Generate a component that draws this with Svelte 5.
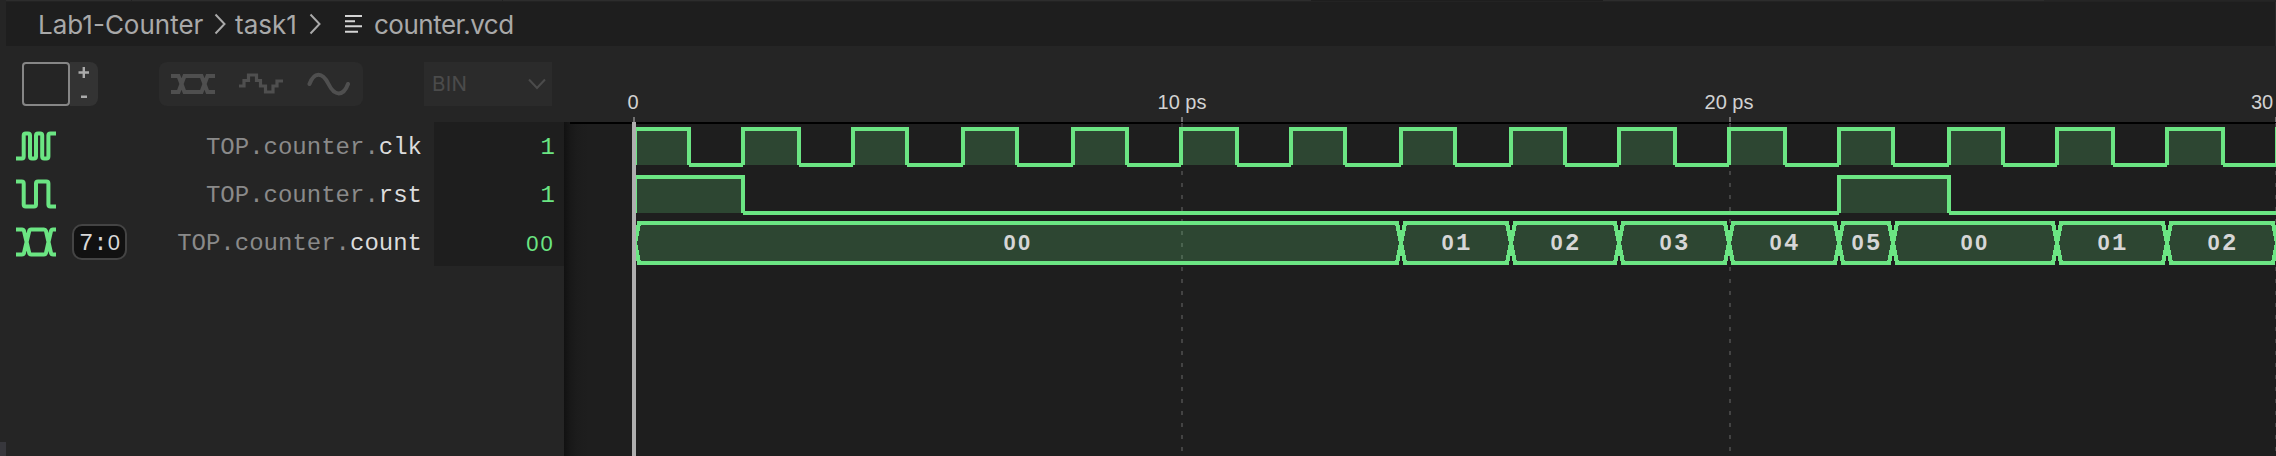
<script>
  const ORIGIN = 317.03;
  const PS = 27.38;
  const LEFT = 564;
  // Device-pixel position of a time in picoseconds, relative to the wave pane.
  const at = (t) => 2 * Math.floor(ORIGIN + PS * t) + 1 - LEFT;

  const clockPulses = Array.from({ length: 16 }, (_, i) => [2 * i, 2 * i + 1]);
  const resetPulses = [[0, 2], [22, 24]];
  const buses = [
    [0, 14, '00'], [14, 16, '01'], [16, 18, '02'], [18, 20, '03'], [20, 22, '04'],
    [22, 23, '05'], [23, 26, '00'], [26, 28, '01'], [28, 30, '02'], [30, 32, '03']
  ];
  // time, label, horizontal offset of the label and of the tick mark
  const ticks = [[0, '0', -2, -2], [10, '10 ps', 1, 0], [20, '20 ps', 0, 0], [30, '30', -15, -2]];

  const pulsePath = (list, hi, lo) => {
    let d = '';
    list.forEach(([a, b], i) => {
      const next = list[i + 1] ? at(list[i + 1][0]) : 1800;
      d += `M${at(a)} ${lo}V${hi}H${at(b)}V${lo}M${at(b)} ${lo}H${next}`;
    });
    return d;
  };
  const fillPath = (list, hi, lo) =>
    list.map(([a, b]) => `M${at(a)} ${lo}V${hi}H${at(b)}V${lo}Z`).join('');
  const busPoints = (a, b) => {
    const x = at(a), y = at(b);
    return `${x},121 ${x + 4},101 ${y - 4},101 ${y},121 ${y - 4},141 ${x + 4},141`;
  };

  const signals = [
    { kind: 'clock', name: 'clk', value: '1' },
    { kind: 'bit', name: 'rst', value: '1' },
    { kind: 'bus', name: 'count', value: '00', range: '7:0' }
  ];
</script>

{#snippet digits(text)}{#each text.split('') as ch}{#if ch === '0'}<span class="zero">0</span>{:else}{ch}{/if}{/each}{/snippet}

<div class="app">
  <div class="rail"><i></i></div>
  <div class="editor">
    <div class="tabs-edge"></div>
    <nav class="crumbs">
      <span class="c1">Lab1-Counter</span>
      <svg class="chev" width="12" height="22" viewBox="0 0 12 22"><path d="M1.5 1.5L10.5 11L1.5 20.5" /></svg>
      <span class="c2">task1</span>
      <svg class="chev second" width="12" height="22" viewBox="0 0 12 22"><path d="M1.5 1.5L10.5 11L1.5 20.5" /></svg>
      <svg class="lines" width="18" height="20" viewBox="0 0 18 20"><path d="M0 2H17M0 7.3H10M0 12.3H17M0 17.7H13" /></svg>
      <span class="c3">counter.vcd</span>
    </nav>

    <div class="body">
      <aside>
        <div class="toolbar">
          <div class="swatch"></div>
          <div class="step">
            <svg width="28" height="44" viewBox="0 0 28 44"><path d="M8.5 10.5H19M13.8 5V16M11 34.8H17" /></svg>
          </div>
          <div class="modes">
            <svg width="44" height="44" viewBox="0 0 44 44">
              <path d="M0 14H7.5L13.5 30H30.5L36.5 14H44M0 30H7.5L13.5 14H30.5L36.5 30H44" />
            </svg>
            <svg width="44" height="44" viewBox="0 0 44 44">
              <path class="thin" d="M0 24H5V18.5H9.5V13H17.5V18.5H21.5V24H26.5V30H34V24H38V19H44" />
            </svg>
            <svg width="44" height="44" viewBox="0 0 44 44">
              <path class="round" d="M2.5 22C7 9.5 15.5 9.5 21.5 22S36.5 34.5 41 22" />
            </svg>
          </div>
          <div class="select">
            <span>BIN</span>
            <svg width="18" height="12" viewBox="0 0 18 12"><path d="M1 1.5L9 10L17 1.5" /></svg>
          </div>
        </div>

        {#each signals as s}
          <div class="row">
            <div class="label">
              <svg class="kind" width="40" height="30" viewBox="0 0 40 30">
                {#if s.kind === 'clock'}
                  <path d="M0 27.5H6Q7.7 27.5 7.7 25.5V4.5Q7.7 2.5 9.7 2.5H12Q14 2.5 14 4.5V25.5Q14 27.5 16 27.5H18Q20 27.5 20 25.5V4.5Q20 2.5 22 2.5H24.2Q26.2 2.5 26.2 4.5V25.5Q26.2 27.5 28.2 27.5H30.4Q32.4 27.5 32.4 25.5V4.5Q32.4 2.5 34.4 2.5H40" />
                {:else if s.kind === 'bit'}
                  <path d="M0 2.5H5.7Q7.7 2.5 7.7 4.5V25.5Q7.7 27.5 9.7 27.5H18Q20 27.5 20 25.5V4.5Q20 2.5 22 2.5H30.4Q32.4 2.5 32.4 4.5V25.5Q32.4 27.5 34.4 27.5H40" />
                {:else}
                  <path d="M0 2.5H6Q7.5 2.5 8 4L13.2 26Q13.7 27.5 15 27.5H28Q29.4 27.5 30 26L35 4Q35.4 2.5 37 2.5H40M0 27.5H6Q7.5 27.5 8 26L13.2 4Q13.7 2.5 15 2.5H28Q29.4 2.5 30 4L35 26Q35.4 27.5 37 27.5H40" />
                {/if}
              </svg>
              {#if s.range}<span class="range">{@render digits(s.range)}</span>{/if}
              <span class="name">TOP.counter.<b>{s.name}</b></span>
            </div>
            <div class="value">{@render digits(s.value)}</div>
          </div>
        {/each}
      </aside>

      <section>
        <svg class="ruler" width="1712" height="76" viewBox="0 0 1712 76">
          {#each ticks as [t, label, dx, tickDx]}
            <text x={at(t) + dx} y="63" text-anchor="middle">{label}</text>
            <rect x={at(t) + tickDx + (t === 0 ? 0 : 0)} y="71" width="2" height="5" />
          {/each}
        </svg>
        <div class="pane">
          <svg width="1712" height="334" viewBox="0 0 1712 334">
            <rect class="rule" x="6" y="0" width="1706" height="2" />
            {#each ticks.slice(1) as [t, , , tickDx]}
              <path class="grid" d={`M${at(t) + 1 + tickDx} 1V334`} />
            {/each}
            <g class="wave">
              <path class="fill" d={fillPath(clockPulses, 7, 43)} />
              <path d={pulsePath(clockPulses, 7, 43)} />
              <path class="fill" d={fillPath(resetPulses, 55, 91)} />
              <path d={pulsePath(resetPulses, 55, 91)} />
              {#each buses as [a, b]}
                <polygon points={busPoints(a, b)} />
              {/each}
            </g>
            {#each buses.slice(0, -1) as [a, b, v]}
              <text class="busval" x={(at(a) + at(b)) / 2} y="128" text-anchor="middle">{#each v.split('') as ch}<tspan class:zero={ch === '0'}>{ch}</tspan>{/each}</text>
            {/each}
            <rect class="cursor" x="68" y="0" width="4" height="334" />
          </svg>
        </div>
      </section>
    </div>
  </div>
</div>

<style>
  :global(body) { background: #1e1e1e; overflow: hidden; }
  .app { display: flex; width: 2276px; height: 456px; background: #252525; overflow: hidden; }
  .rail { width: 6px; height: 456px; flex: none; display: flex; align-items: flex-end; background: #252525; }
  .rail i { width: 6px; height: 14px; background: #37373c; }
  .editor { flex: 1; min-width: 0; display: flex; flex-direction: column; }
  .tabs-edge {
    height: 1px; border-bottom: 1px solid #232323;
    background: linear-gradient(90deg, #2d2d2d 125px, #222 125px 126px, #2d2d2d 126px 496px, #222 496px 497px, #2d2d2d 497px 1305px, #1e1e1e 1305px 1597px, #2d2d2d 1597px 2038px, #252525 2038px);
  }
  .crumbs {
    height: 44px; box-sizing: border-box; padding-left: 32px; display: flex; align-items: center;
    background: #1e1e1e; border-right: 1px solid #2b2b2b; color: #a9a9a9;
    font: 26px/44px Inter, sans-serif; white-space: pre;
  }
  .crumbs span { flex: none; position: relative; top: 1px; }
  .c1 { width: 176px; }
  .c2 { width: 61px; margin-left: 9px; }
  .c3 { margin-left: 11px; letter-spacing: -0.5px; }
  .crumbs svg { flex: none; fill: none; stroke: #a9a9a9; stroke-width: 2; }
  .chev.second { margin-left: 13px; }
  .crumbs .lines { margin-left: 24px; stroke: #d4d4d4; }

  .body { display: flex; height: 410px; }
  aside { width: 558px; flex: none; background: #252525; }
  .toolbar { height: 76px; box-sizing: border-box; padding: 16px 0 0 16px; display: flex; }
  .swatch { width: 44px; height: 40px; border: 2px solid #868686; border-radius: 4px; }
  .step { width: 28px; height: 44px; background: #333; border-radius: 0 8px 8px 0; }
  .step svg { display: block; fill: none; stroke: #aaa; stroke-width: 2.4; }
  .modes {
    width: 204px; height: 44px; box-sizing: border-box; margin-left: 61px; padding: 0 12px;
    display: flex; justify-content: space-between; background: #2b2b2b; border-radius: 8px;
  }
  .modes path { fill: none; stroke: #4f4f4f; stroke-width: 4; }
  .modes .thin { stroke-width: 3.2; }
  .modes .round { stroke-linecap: round; }
  .select {
    width: 128px; height: 44px; box-sizing: border-box; margin-left: 61px; padding: 0 6px 0 8px;
    display: flex; align-items: center; justify-content: space-between; background: #2b2b2b;
    color: #4b4b4b; font: 20.5px/44px Inter, sans-serif; letter-spacing: 0.3px;
  }
  .select svg { fill: none; stroke: #4b4b4b; stroke-width: 2; }

  .row { display: flex; height: 48px; font: 24px/52px "Liberation Mono", monospace; }
  .label { flex: 1; height: 48px; box-sizing: border-box; padding: 0 12px 0 10px; display: flex; align-items: center; }
  .kind { flex: none; fill: none; stroke: #6be583; stroke-width: 4; }
  .range {
    width: 51px; height: 32px; margin-left: 16px; border: 2px solid #444; border-radius: 10px;
    background: #111; color: #d8d8d8; line-height: 34px; text-align: center;
  }
  .zero { font-family: "Liberation Sans", sans-serif; font-size: 22px; letter-spacing: 2.2px; }
  .range .zero { margin-right: -2px; }
  .name { margin-left: auto; height: 48px; color: #8a8a8a; }
  .name b { font-weight: 400; color: #dcdcdc; }
  .value {
    width: 130px; height: 48px; box-sizing: border-box; padding-right: 9px;
    text-align: right; background: #1e1e1e; color: #6be583;
  }

  section { width: 1712px; flex: none; overflow: hidden; background: #1e1e1e; }
  .ruler { display: block; background: #252525; }
  .ruler text { font: 20px "Liberation Sans", sans-serif; fill: #d2d2d2; }
  .ruler rect { fill: #707070; }
  .pane { background: linear-gradient(90deg, #111 0, #181818 6px, #1c1c1c 13px, #1e1e1e 24px); }
  .pane svg { display: block; }
  .rule { fill: #000; }
  .grid { stroke: #434343; stroke-width: 2; stroke-dasharray: 4 8; }
  .wave { fill: none; stroke: #6be583; stroke-width: 4; shape-rendering: crispEdges; }
  .wave .fill { fill: rgba(107, 229, 131, 0.2); stroke: none; }
  .wave polygon { fill: rgba(107, 229, 131, 0.2); }
  .busval { font: bold 24px "Liberation Mono", monospace; fill: #d6d6d6; }
  .busval .zero { font-family: "Liberation Sans", sans-serif; font-size: 22px; letter-spacing: 2.2px; }
  .cursor { fill: #aeaeae; }
</style>
